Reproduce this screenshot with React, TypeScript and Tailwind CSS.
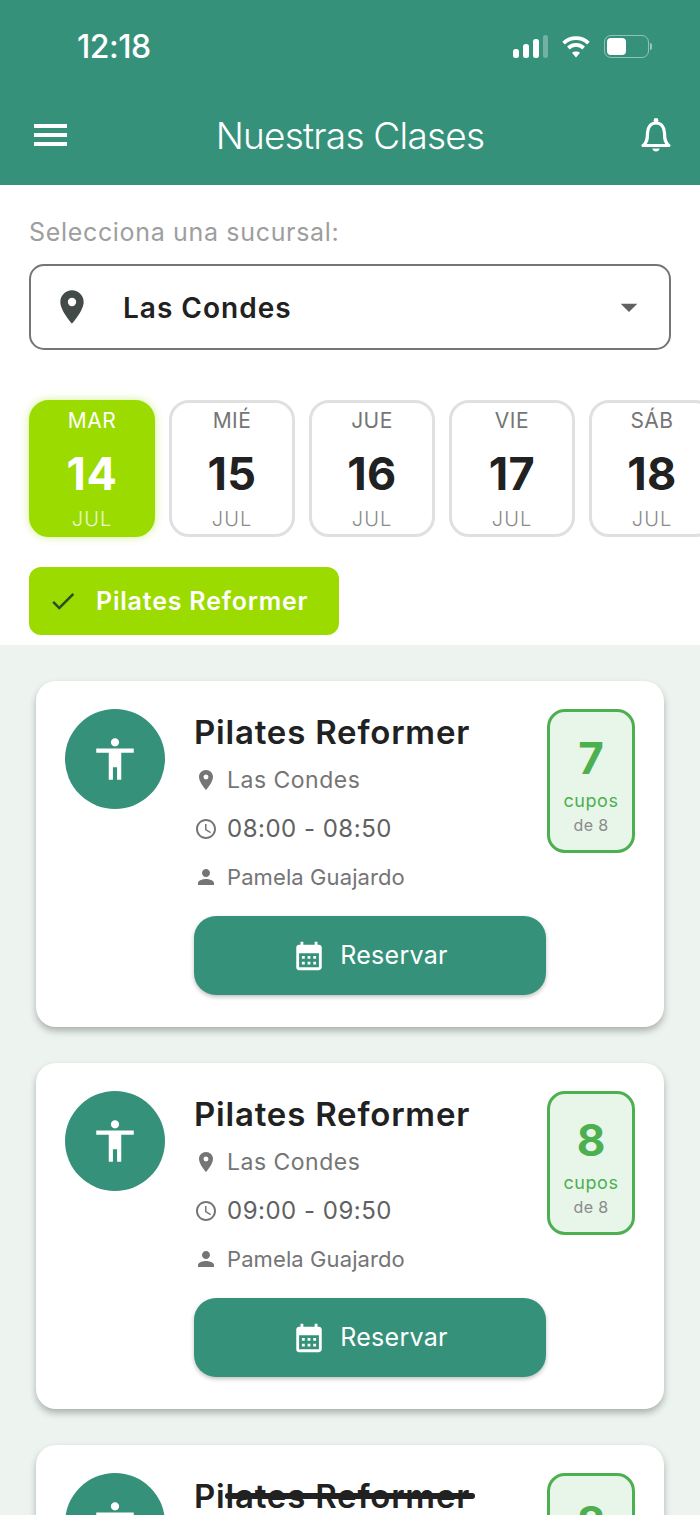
import {
  MdAccessibility,
  MdAccessTime,
  MdArrowDropDown,
  MdCalendarMonth,
  MdCheck,
  MdLocationOn,
  MdPerson,
} from "react-icons/md";

const days = [
  { name: "MAR", day: 14, active: true },
  { name: "MIÉ", day: 15 },
  { name: "JUE", day: 16 },
  { name: "VIE", day: 17 },
  { name: "SÁB", day: 18 },
];

const classes = [
  { spots: 7, time: "08:00 - 08:50" },
  { spots: 8, time: "09:00 - 09:50" },
  { spots: 8, time: "10:00 - 10:50", struck: true },
];

function StatusBar() {
  return (
    <div className="flex h-[92px] items-center justify-between pl-[77px] pr-[48px] text-white">
      <span className="mt-[2px] text-[32px] font-medium leading-none tracking-[-0.5px]">12:18</span>
      <div className="flex items-center gap-[13px]">
        <svg width="35" height="23" viewBox="0 0 35 23" fill="white">
          <rect x="0" y="14" width="6" height="9" rx="2.5" />
          <rect x="10" y="9" width="6" height="14" rx="2.5" />
          <rect x="20" y="4" width="6" height="19" rx="2.5" />
          <rect x="30" y="0" width="5" height="23" rx="2.5" opacity="0.3" />
        </svg>
        <svg width="30" height="23" viewBox="0 0 30 24" fill="none" stroke="white" strokeWidth="4">
          <path d="M2 8.5C9.5 1.6 20.5 1.6 28 8.5" />
          <path d="M7 13.5C11.8 9.3 18.2 9.3 23 13.5" />
          <path d="M15 23.5L10.8 18.6C13.2 16.6 16.8 16.6 19.2 18.6Z" fill="white" stroke="none" />
        </svg>
        <div className="flex items-center gap-[1px]">
          <div className="flex h-[23px] w-[45px] items-center rounded-[7px] border-[1.5px] border-white/45 p-[2px]">
            <div className="h-full w-[19px] rounded-[4px] bg-white" />
          </div>
          <div className="h-[7px] w-[2px] rounded-r-full bg-white/50" />
        </div>
      </div>
    </div>
  );
}

function TopBar() {
  return (
    <div className="flex h-[93px] items-start justify-between px-[28px] pt-[18px] text-white">
      <div className="w-[40px] pl-[6px] pt-[14px]">
        <div className="flex w-[33px] flex-col gap-[5px]">
          <div className="h-[4px] bg-white" />
          <div className="h-[4px] bg-white" />
          <div className="h-[4px] bg-white" />
        </div>
      </div>
      <h1 className="text-[37px] font-light leading-[52px] tracking-[-0.77px]">Nuestras Clases</h1>
      <div className="flex w-[40px] justify-end pt-[7px]">
        <svg width="32" height="38" viewBox="0 0 32 38" fill="none" stroke="white" strokeWidth="3.2">
          <path d="M3 28.5C7 26 7.5 22 7.5 16C7.5 10 11 6 16 6C21 6 24.5 10 24.5 16C24.5 22 25 26 29 28.5Z" strokeLinejoin="round" />
          <circle cx="16" cy="3.5" r="2.4" fill="white" stroke="none" />
          <path d="M12.5 31.5H19.5C19.5 35.5 12.5 35.5 12.5 31.5Z" fill="white" stroke="none" />
        </svg>
      </div>
    </div>
  );
}

function DayCard({ name, day, active }: { name: string; day: number; active?: boolean }) {
  return (
    <div
      className={`flex h-[137px] w-[126px] shrink-0 flex-col items-center rounded-[20px] border-[3px] ${
        active
          ? "border-[#9bdb00] bg-[#9bdb00] text-white shadow-[0_0_8px_rgba(155,219,0,0.45)]"
          : "border-[#e0e0e0] bg-white"
      }`}
    >
      <span className={`mt-[3px] text-[21px] leading-[30px] tracking-[0.5px] ${active ? "text-white" : "text-[#757575]"}`}>{name}</span>
      <span className={`mt-[13px] text-[45px] font-bold leading-[50px] tracking-[0.5px] ${active ? "text-white" : "text-[#212121]"}`}>{day}</span>
      <span className={`mt-[7px] text-[20px] font-light leading-[26px] tracking-[1px] ${active ? "text-white/80" : "text-[#8a8a8a]"}`}>JUL</span>
    </div>
  );
}

function ClassCard({ spots, time, struck }: { spots: number; time: string; struck?: boolean }) {
  return (
    <div className="flex h-[346px] shrink-0 rounded-[20px] bg-white px-[29px] pt-[28px] shadow-[0_4px_7px_rgba(0,0,0,0.28)]">
      <div className="flex h-[100px] w-[100px] shrink-0 items-center justify-center rounded-full bg-[#36917a] text-white">
        <MdAccessibility size={50} />
      </div>
      <div className="ml-[29px] w-[353px] shrink-0">
        <div className="relative">
          <h2 className="text-[33px] font-semibold leading-[46px] tracking-[0.8px] text-[#212121]">Pilates Reformer</h2>
          {struck && <div className="absolute left-[31px] top-[20px] h-[6px] w-[250px] rounded-full bg-[#212121]" />}
        </div>
        <div className="mt-[1px] flex h-[48px] items-center text-[#757575]">
          <div className="flex w-[33px] justify-center pr-[9px]">
            <MdLocationOn size={24} />
          </div>
          <span className="text-[23px] leading-none tracking-[0.5px]">Las Condes</span>
        </div>
        <div className="flex h-[49px] items-center pt-[1px] text-[#616161]">
          <div className="flex w-[33px] justify-center pr-[9px] text-[#757575]">
            <MdAccessTime size={24} />
          </div>
          <span className="text-[24px] leading-none tracking-[0.5px]">{time}</span>
        </div>
        <div className="flex h-[47px] items-center text-[#757575]">
          <div className="flex w-[33px] justify-center pr-[9px]">
            <MdPerson size={26} />
          </div>
          <span className="text-[22px] leading-none tracking-[0.1px]">Pamela Guajardo</span>
        </div>
        <button className="mt-[16px] flex h-[79px] w-[352px] items-center justify-center gap-[14px] rounded-[22px] bg-[#36917a] text-white shadow-[0_2px_4px_rgba(0,0,0,0.25)]">
          <MdCalendarMonth size={34} />
          <span className="text-[25px] leading-none tracking-[0.3px]">Reservar</span>
        </button>
      </div>
      <div className="flex h-[144px] w-[88px] shrink-0 flex-col items-center rounded-[18px] border-[3px] border-[#4caf50] bg-[#e8f5e9]">
        <span className="mt-[21px] text-[44px] font-bold leading-[50px] text-[#4caf50]">{spots}</span>
        <span className="mt-[6px] text-[18px] leading-[24px] tracking-[0.6px] text-[#4caf50]">cupos</span>
        <span className="text-[16px] leading-[24px] tracking-[0.4px] text-[#8a8a8a]">de 8</span>
      </div>
    </div>
  );
}

export default function App() {
  return (
    <div className="flex h-[1515px] w-[700px] flex-col overflow-hidden bg-white font-['Inter',sans-serif]">
      <header className="h-[185px] shrink-0 bg-[#36917a]">
        <StatusBar />
        <TopBar />
      </header>

      <section className="flex h-[460px] shrink-0 flex-col bg-white">
        <p className="ml-[29px] mt-[32px] text-[25px] leading-[30px] tracking-[0.67px] text-[#9e9e9e]">
          Selecciona una sucursal:
        </p>
        <div className="mx-[29px] mt-[17px] flex h-[86px] items-center rounded-[15px] border-2 border-[#757575] pl-[21px] pr-[20px]">
          <MdLocationOn size={40} className="text-[#424b48]" />
          <span className="ml-[31px] mt-[1px] text-[28px] font-semibold tracking-[1px] text-[#212121]">Las Condes</span>
          <MdArrowDropDown size={40} className="ml-auto text-[#616161]" />
        </div>
        <div className="ml-[29px] mt-[50px] flex gap-[14px]">
          {days.map((d) => (
            <DayCard key={d.day} {...d} />
          ))}
        </div>
        <div className="ml-[29px] mt-[30px] flex h-[68px] w-[310px] items-center rounded-[12px] bg-[#9bdb00] pl-[19px]">
          <MdCheck size={30} className="text-[#2f4a2a]" />
          <span className="ml-[18px] mt-[2px] text-[25px] font-semibold tracking-[0.8px] text-white">Pilates Reformer</span>
        </div>
      </section>

      <main className="flex flex-1 flex-col gap-[36px] overflow-hidden bg-[#edf4f0] px-[36px] pt-[36px]">
        {classes.map((c) => (
          <ClassCard key={c.time} {...c} />
        ))}
      </main>
    </div>
  );
}
